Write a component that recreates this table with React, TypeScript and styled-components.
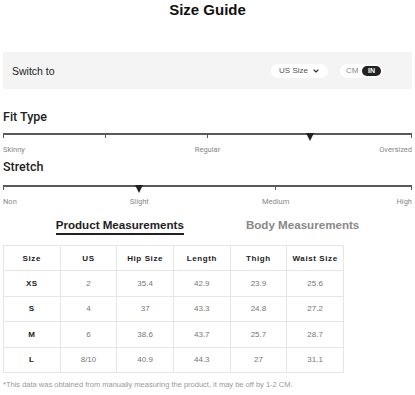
import { FunctionComponent } from "react";
import styled, { createGlobalStyle } from "styled-components";
import { ChevronDown } from "lucide-react";

const GlobalStyle = createGlobalStyle`
  html, body {
    margin: 0;
    padding: 0;
    background: #fff;
  }
  body {
    font-family: "Liberation Sans", Arial, sans-serif;
  }
`;

const Page = styled.div`
  width: 415px;
  height: 395px;
  box-sizing: border-box;
  padding: 0 3px;
  overflow: hidden;
  color: #222;
`;
const Title = styled.h1`
  margin: 0;
  height: 20px;
  line-height: 20px;
  font-size: 15px;
  font-weight: 700;
  text-align: center;
  color: #111;
`;
const SwitchBar = styled.div`
  margin-top: 32px;
  height: 37px;
  background: #f4f4f4;
  display: flex;
  align-items: center;
  padding: 0 29px 0 9px;
`;
const SwitchLabel = styled.span`
  flex: 1;
  font-size: 10.5px;
  color: #222;
`;
const UnitSelect = styled.div`
  width: 57px;
  height: 14px;
  border-radius: 7px;
  background: #fff;
  display: flex;
  align-items: center;
  justify-content: center;
  gap: 4px;
  font-size: 8px;
  color: #555;
`;
const UnitToggle = styled.div`
  margin-left: 12px;
  width: 43px;
  height: 14px;
  border-radius: 7px;
  background: #fff;
  box-sizing: border-box;
  padding: 0 2px 0 6px;
  display: flex;
  align-items: center;
  justify-content: space-between;
  font-size: 8px;
  color: #888;
`;
const ToggleOn = styled.span`
  width: 19px;
  height: 10px;
  border-radius: 5px;
  background: #222;
  color: #fff;
  font-size: 7px;
  font-weight: 700;
  display: flex;
  align-items: center;
  justify-content: center;
`;
const ScaleTitle = styled.h2<{ $top: number }>`
  margin: ${(p) => p.$top}px 0 0;
  font-family: Roboto, "Liberation Sans", sans-serif;
  font-weight: 500;
  font-size: 12.5px;
  line-height: 16px;
  color: #222;
`;
const Track = styled.div<{ $top: number }>`
  position: relative;
  margin-top: ${(p) => p.$top}px;
  height: 8px;
  &::before {
    content: "";
    position: absolute;
    left: 0;
    right: 0;
    top: 0;
    height: 2px;
    background: #5a5a5a;
  }
`;
const Tick = styled.span<{ $pos: number }>`
  position: absolute;
  top: 0;
  left: calc(${(p) => p.$pos}% - ${(p) => (p.$pos === 100 ? 1 : p.$pos === 0 ? 0 : 0.5)}px);
  width: 1px;
  height: 5px;
  background: #5a5a5a;
`;
const Marker = styled.span<{ $pos: number }>`
  position: absolute;
  top: 0;
  left: ${(p) => p.$pos}%;
  transform: translateX(-50%);
  width: 0;
  height: 0;
  border-left: 4px solid transparent;
  border-right: 4px solid transparent;
  border-top: 8px solid #222;
`;
const LabelRow = styled.div`
  position: relative;
  margin-top: 4px;
  height: 10px;
`;
const ScaleLabel = styled.span<{ $pos: number }>`
  position: absolute;
  top: 0;
  left: ${(p) => p.$pos}%;
  transform: translateX(
    ${(p) => (p.$pos === 0 ? "0" : p.$pos === 100 ? "-100%" : "-50%")}
  );
  font-family: Roboto, "Liberation Sans", sans-serif;
  font-size: 7.5px;
  line-height: 10px;
  color: #888;
  white-space: nowrap;
`;
const Tabs = styled.div`
  margin-top: 11px;
  display: flex;
  justify-content: center;
  gap: 62px;
`;
const Tab = styled.div<{ $active?: boolean }>`
  font-size: 11.6px;
  font-weight: 700;
  line-height: 14px;
  color: ${(p) => (p.$active ? "#222" : "#888")};
  border-bottom: 2px solid ${(p) => (p.$active ? "#222" : "transparent")};
  padding-bottom: 1px;
`;
const Table = styled.table`
  margin-top: 10px;
  width: 341px;
  table-layout: fixed;
  border-collapse: collapse;
`;
const Cell = styled.td<{ $head?: boolean; $strong?: boolean }>`
  height: 24.4px;
  padding: 0;
  border: 1px solid #e6e6e6;
  text-align: center;
  font-size: 8px;
  font-weight: ${(p) => (p.$head || p.$strong ? 700 : 400)};
  letter-spacing: ${(p) => (p.$head || p.$strong ? "0.6px" : "0")};
  color: ${(p) => (p.$head || p.$strong ? "#222" : "#777")};
`;
const Note = styled.p`
  margin: 7px 0 0;
  font-size: 7.5px;
  line-height: 10px;
  color: #999;
`;

type Scale = {
  title: string;
  top: number;
  trackTop: number;
  ticks: number[];
  marker: number;
  labels: { text: string; pos: number }[];
};

const scales: Scale[] = [
  {
    title: "Fit Type",
    top: 20,
    trackTop: 8,
    ticks: [0, 25, 50, 75, 100],
    marker: 75,
    labels: [
      { text: "Skinny", pos: 0 },
      { text: "Regular", pos: 50 },
      { text: "Oversized", pos: 100 },
    ],
  },
  {
    title: "Stretch",
    top: 4,
    trackTop: 10,
    ticks: [0, 33.33, 66.67, 100],
    marker: 33.33,
    labels: [
      { text: "Non", pos: 0 },
      { text: "Slight", pos: 33.33 },
      { text: "Medium", pos: 66.67 },
      { text: "High", pos: 100 },
    ],
  },
];

const headers = ["Size", "US", "Hip Size", "Length", "Thigh", "Waist Size"];
const rows = [
  ["XS", "2", "35.4", "42.9", "23.9", "25.6"],
  ["S", "4", "37", "43.3", "24.8", "27.2"],
  ["M", "6", "38.6", "43.7", "25.7", "28.7"],
  ["L", "8/10", "40.9", "44.3", "27", "31.1"],
];

const App: FunctionComponent = () => {
  return (
    <Page>
      <GlobalStyle />
      <Title>Size Guide</Title>
      <SwitchBar>
        <SwitchLabel>Switch to</SwitchLabel>
        <UnitSelect>
          US Size <ChevronDown size={8} strokeWidth={3.5} color="#333" />
        </UnitSelect>
        <UnitToggle>
          CM
          <ToggleOn>IN</ToggleOn>
        </UnitToggle>
      </SwitchBar>
      {scales.map((s) => (
        <section key={s.title}>
          <ScaleTitle $top={s.top}>{s.title}</ScaleTitle>
          <Track $top={s.trackTop}>
            {s.ticks.map((t) => (
              <Tick key={t} $pos={t} />
            ))}
            <Marker $pos={s.marker} />
          </Track>
          <LabelRow>
            {s.labels.map((l) => (
              <ScaleLabel key={l.text} $pos={l.pos}>
                {l.text}
              </ScaleLabel>
            ))}
          </LabelRow>
        </section>
      ))}
      <Tabs>
        <Tab $active>Product Measurements</Tab>
        <Tab>Body Measurements</Tab>
      </Tabs>
      <Table>
        <thead>
          <tr>
            {headers.map((h) => (
              <Cell as="th" key={h} $head>
                {h}
              </Cell>
            ))}
          </tr>
        </thead>
        <tbody>
          {rows.map((r) => (
            <tr key={r[0]}>
              {r.map((v, i) => (
                <Cell key={i} $strong={i === 0}>
                  {v}
                </Cell>
              ))}
            </tr>
          ))}
        </tbody>
      </Table>
      <Note>
        *This data was obtained from manually measuring the product, it may be
        off by 1-2 CM.
      </Note>
    </Page>
  );
};

export default App;
